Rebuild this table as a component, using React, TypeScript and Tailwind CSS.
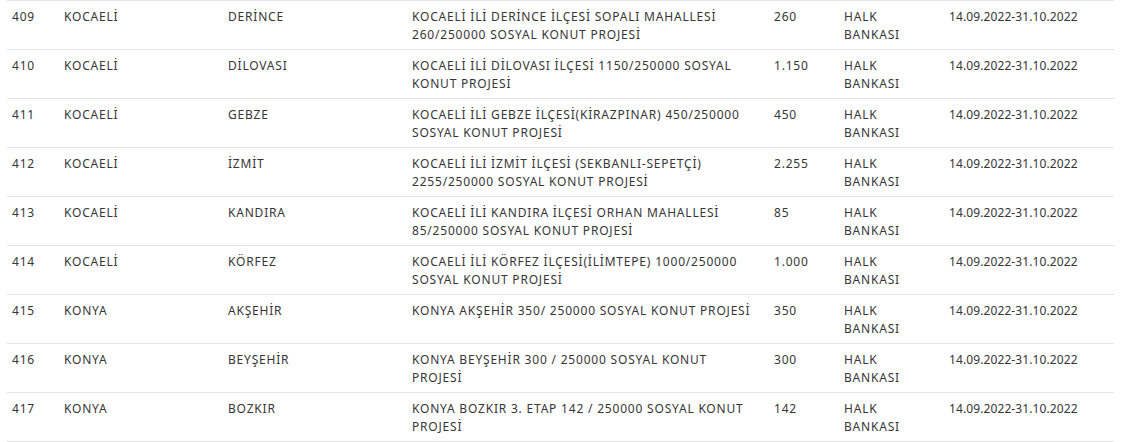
type Row = {
  no: string;
  il: string;
  ilce: string;
  proje: string[];
  adet: string;
  banka: string[];
  tarih: string;
};

const rows: Row[] = [
  { no: "409", il: "KOCAELİ", ilce: "DERİNCE", proje: ["KOCAELİ İLİ DERİNCE İLÇESİ SOPALI MAHALLESİ", "260/250000 SOSYAL KONUT PROJESİ"], adet: "260", banka: ["HALK", "BANKASI"], tarih: "14.09.2022-31.10.2022" },
  { no: "410", il: "KOCAELİ", ilce: "DİLOVASI", proje: ["KOCAELİ İLİ DİLOVASI İLÇESİ 1150/250000 SOSYAL", "KONUT PROJESİ"], adet: "1.150", banka: ["HALK", "BANKASI"], tarih: "14.09.2022-31.10.2022" },
  { no: "411", il: "KOCAELİ", ilce: "GEBZE", proje: ["KOCAELİ İLİ GEBZE İLÇESİ(KİRAZPINAR) 450/250000", "SOSYAL KONUT PROJESİ"], adet: "450", banka: ["HALK", "BANKASI"], tarih: "14.09.2022-31.10.2022" },
  { no: "412", il: "KOCAELİ", ilce: "İZMİT", proje: ["KOCAELİ İLİ İZMİT İLÇESİ (SEKBANLI-SEPETÇİ)", "2255/250000 SOSYAL KONUT PROJESİ"], adet: "2.255", banka: ["HALK", "BANKASI"], tarih: "14.09.2022-31.10.2022" },
  { no: "413", il: "KOCAELİ", ilce: "KANDIRA", proje: ["KOCAELİ İLİ KANDIRA İLÇESİ ORHAN MAHALLESİ", "85/250000 SOSYAL KONUT PROJESİ"], adet: "85", banka: ["HALK", "BANKASI"], tarih: "14.09.2022-31.10.2022" },
  { no: "414", il: "KOCAELİ", ilce: "KÖRFEZ", proje: ["KOCAELİ İLİ KÖRFEZ İLÇESİ(İLİMTEPE) 1000/250000", "SOSYAL KONUT PROJESİ"], adet: "1.000", banka: ["HALK", "BANKASI"], tarih: "14.09.2022-31.10.2022" },
  { no: "415", il: "KONYA", ilce: "AKŞEHİR", proje: ["KONYA AKŞEHİR 350/ 250000 SOSYAL KONUT PROJESİ"], adet: "350", banka: ["HALK", "BANKASI"], tarih: "14.09.2022-31.10.2022" },
  { no: "416", il: "KONYA", ilce: "BEYŞEHİR", proje: ["KONYA BEYŞEHİR 300 / 250000 SOSYAL KONUT", "PROJESİ"], adet: "300", banka: ["HALK", "BANKASI"], tarih: "14.09.2022-31.10.2022" },
  { no: "417", il: "KONYA", ilce: "BOZKIR", proje: ["KONYA BOZKIR 3. ETAP 142 / 250000 SOSYAL KONUT", "PROJESİ"], adet: "142", banka: ["HALK", "BANKASI"], tarih: "14.09.2022-31.10.2022" },
];

function Lines({ items }: { items: string[] }) {
  return (
    <>
      {items.map((l, i) => (
        <div key={i} className="whitespace-nowrap">
          {l}
        </div>
      ))}
    </>
  );
}

export default function App() {
  return (
    <div className="bg-white w-[1123px] h-[442px] overflow-hidden pl-[7px] pr-[9px]">
      <table
        className="w-[1107px] table-fixed border-collapse text-[12px] leading-[18px] text-[#363636] tracking-[0.8px]"
        style={{ fontFamily: '"Noto Sans", sans-serif' }}
      >
        <colgroup>
          <col className="w-[52px]" />
          <col className="w-[164px]" />
          <col className="w-[184px]" />
          <col className="w-[362px]" />
          <col className="w-[70px]" />
          <col className="w-[105px]" />
          <col className="w-[170px]" />
        </colgroup>
        <tbody>
          {rows.map((r) => (
            <tr key={r.no} className="h-[49px] border-t border-b border-[#e3e3e3] align-top">
              <td className="px-[5px] pt-[7px]">{r.no}</td>
              <td className="px-[5px] pt-[7px]">{r.il}</td>
              <td className="px-[5px] pt-[7px]">{r.ilce}</td>
              <td className="px-[5px] pt-[7px]">
                <Lines items={r.proje} />
              </td>
              <td className="px-[5px] pt-[7px]">{r.adet}</td>
              <td className="px-[5px] pt-[7px]">
                <Lines items={r.banka} />
              </td>
              <td className="px-[5px] pt-[7px] tracking-[0.1px]">{r.tarih}</td>
            </tr>
          ))}
        </tbody>
      </table>
    </div>
  );
}
